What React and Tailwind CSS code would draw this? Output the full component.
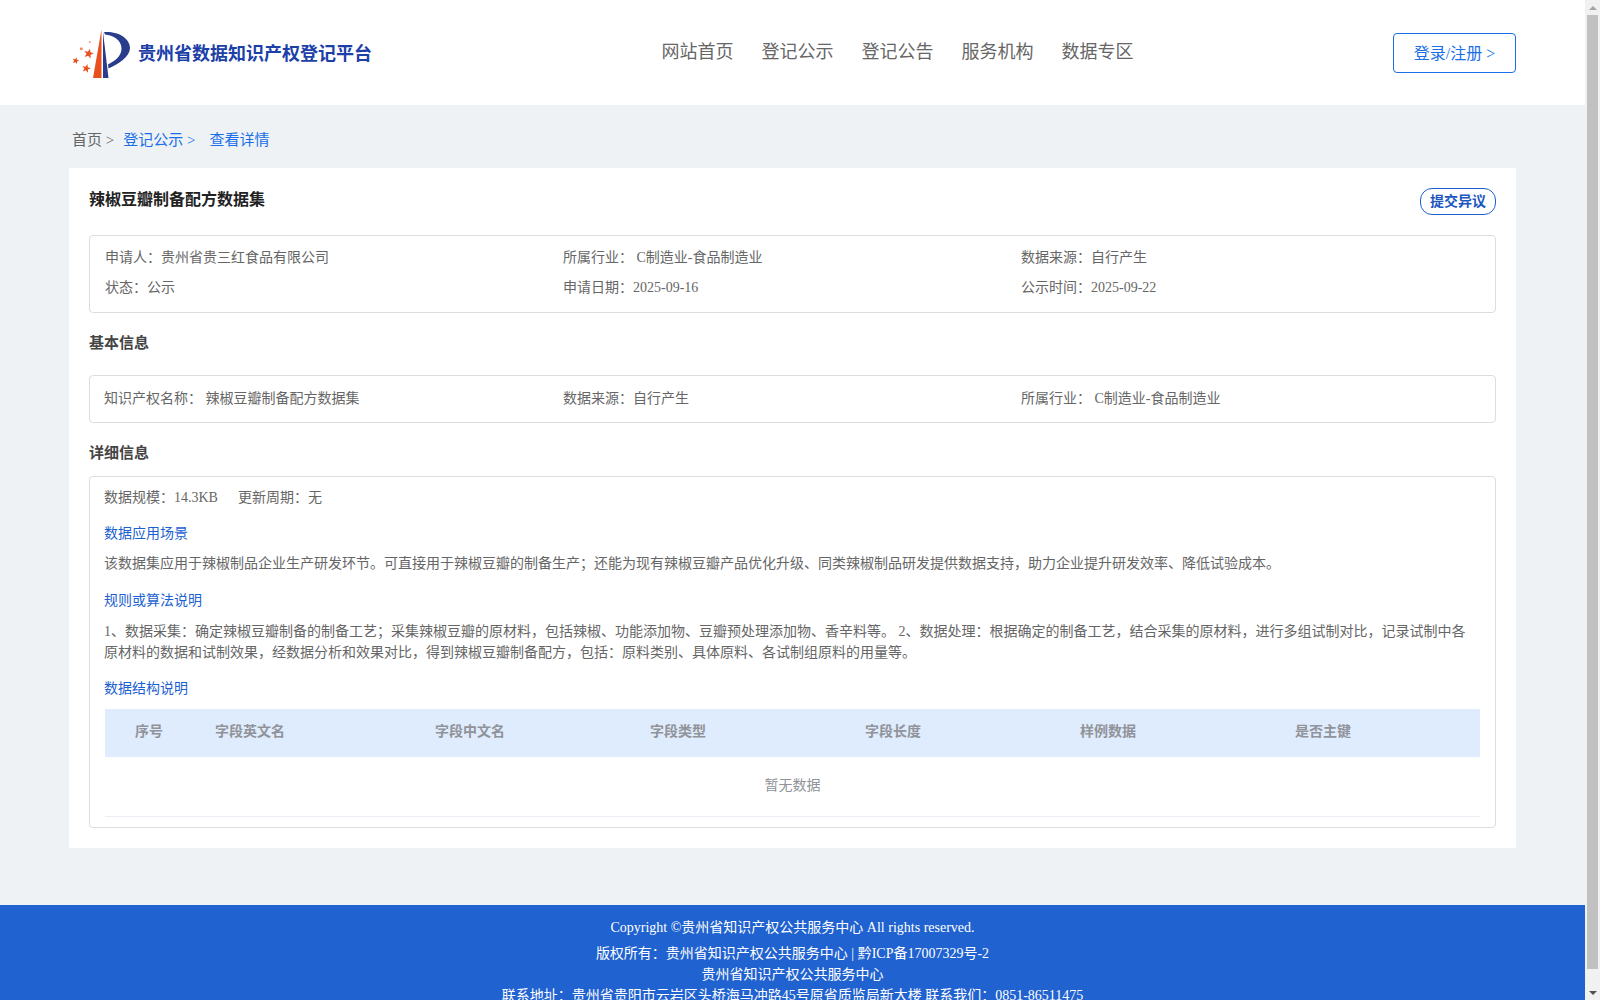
const serif = "font-['Liberation_Serif','Noto_Sans_CJK_SC',serif]";

function starPoints(cx, cy, r) {
  const pts = [];
  for (let i = 0; i < 10; i++) {
    const radius = i % 2 === 0 ? r : r * 0.42;
    const a = -Math.PI / 2 + (i * Math.PI) / 5 + 0.25;
    pts.push(`${(cx + radius * Math.cos(a)).toFixed(2)},${(cy + radius * Math.sin(a)).toFixed(2)}`);
  }
  return pts.join(" ");
}

function Logo() {
  return (
    <svg width="70" height="60" viewBox="0 0 70 60" className="-ml-[4px] shrink-0">
      <path d="M33.5 6.5 L25 55 L33.5 55 Z" fill="#e8501f" />
      <path d="M35 9 L35 55 L40.5 55 Z" fill="#2a3c8c" />
      <path d="M36 9 C50 8 62 15 62 25 C62 34 50 41 40.5 45.5 L40 41.5 C47 38 53.5 33 53.5 25.5 C53.5 17 45 12 37 11.5 Z" fill="#2a3c8c" />
      <polygon points={starPoints(20.7, 30.7, 5.2)} fill="#e8501f" />
      <polygon points={starPoints(18.3, 45.5, 4.6)} fill="#e8501f" />
      <polygon points={starPoints(7.7, 37.7, 3.6)} fill="#e8501f" />
      <circle cx="13.3" cy="25.7" r="1.5" fill="#ef8a5c" />
      <circle cx="21.7" cy="19" r="1.1" fill="#f0a080" />
    </svg>
  );
}

function Scrollbar() {
  return (
    <div className="flex h-screen w-[15px] shrink-0 flex-col bg-[#f1f1f1]">
      <div className="flex h-[15px] shrink-0 items-center justify-center">
        <div className="h-0 w-0 border-x-[4px] border-b-[4px] border-x-transparent border-b-[#a3a3a3]" />
      </div>
      <div className="mx-[2px] h-[954px] shrink-0 bg-[#c1c1c1]" />
      <div className="flex-1" />
      <div className="flex h-[15px] shrink-0 items-center justify-center">
        <div className="h-0 w-0 border-x-[4px] border-t-[4px] border-x-transparent border-t-[#505050]" />
      </div>
    </div>
  );
}

function Field({ label, value }) {
  return <div className="w-[458px] shrink-0">{label}{value}</div>;
}

const columns = ["序号", "字段英文名", "字段中文名", "字段类型", "字段长度", "样例数据", "是否主键"];

export default function App() {
  return (
    <div className={`flex h-screen overflow-hidden bg-[#eff2f5] ${serif}`}>
      <div className="min-w-0 flex-1 overflow-hidden">
        <header className="flex h-[105px] items-center justify-between bg-white pl-[72px] pr-[69px]">
          <div className="flex w-[330px] items-center">
            <Logo />
            <span className="mt-[4px] whitespace-nowrap text-[18px] font-bold text-[#1c3fa8]">贵州省数据知识产权登记平台</span>
          </div>
          <nav className="flex gap-[28px] text-[18px] text-[#666]">
            <span>网站首页</span>
            <span>登记公示</span>
            <span>登记公告</span>
            <span>服务机构</span>
            <span>数据专区</span>
          </nav>
          <button className="h-[40px] w-[123px] rounded-[4px] border border-[#1a6fe8] pt-[2px] text-[16px] text-[#1a6fe8]">登录/注册 &gt;</button>
        </header>

        <div className="flex h-[63px] items-center pl-[72px] pt-[8px] text-[15px] text-[#1a6fe8]">
          <span className="text-[#666]">首页 &gt;</span>
          <span className="ml-[9px]">登记公示 &gt;</span>
          <span className="ml-[14px]">查看详情</span>
        </div>

        <main className="ml-[69px] w-[1447px] bg-white px-[20px] pb-[20px] text-[14px] text-[#666]">
          <div className="flex h-[67px] items-center justify-between">
            <h1 className="-mt-[4px] text-[16px] font-bold text-[#222]">辣椒豆瓣制备配方数据集</h1>
            <button className="h-[27px] w-[76px] rounded-[12px] border border-[#1c5fd0] text-[14px] font-bold text-[#1c56c0]">提交异议</button>
          </div>

          <section className="rounded-[4px] border border-[#ddd] px-[15px] pb-[10px] pt-[11px] leading-[21px]">
            <div className="flex h-[30px] items-start">
              <Field label="申请人：" value="贵州省贵三红食品有限公司" />
              <Field label="所属行业：" value=" C制造业-食品制造业" />
              <Field label="数据来源：" value="自行产生" />
            </div>
            <div className="flex h-[25px] items-start">
              <Field label="状态：" value="公示" />
              <Field label="申请日期：" value="2025-09-16" />
              <Field label="公示时间：" value="2025-09-22" />
            </div>
          </section>

          <h2 className="flex h-[62px] items-center pb-[2px] text-[15px] font-bold text-[#444]">基本信息</h2>

          <section className="flex h-[48px] items-center rounded-[4px] border border-[#ddd] px-[14px] pb-[2px]">
            <div className="w-[459px] shrink-0">知识产权名称： 辣椒豆瓣制备配方数据集</div>
            <div className="w-[458px] shrink-0">数据来源：自行产生</div>
            <div className="w-[458px] shrink-0">所属行业： C制造业-食品制造业</div>
          </section>

          <h2 className="flex h-[53px] items-center pt-[8px] text-[15px] font-bold text-[#444]">详细信息</h2>

          <section className="rounded-[4px] border border-[#ddd] px-[14px] pb-[10px] pt-[10px] leading-[21px]">
            <div>
              <span>数据规模：14.3KB</span>
              <span className="ml-[20px]">更新周期：无</span>
            </div>
            <h3 className="mt-[15px] text-[#1c5fd0]">数据应用场景</h3>
            <p className="mt-[9px]">该数据集应用于辣椒制品企业生产研发环节。可直接用于辣椒豆瓣的制备生产；还能为现有辣椒豆瓣产品优化升级、同类辣椒制品研发提供数据支持，助力企业提升研发效率、降低试验成本。</p>
            <h3 className="mt-[16px] text-[#1c5fd0]">规则或算法说明</h3>
            <p className="mt-[10px] pr-[6px]">1、数据采集：确定辣椒豆瓣制备的制备工艺；采集辣椒豆瓣的原材料，包括辣椒、功能添加物、豆瓣预处理添加物、香辛料等。 2、数据处理：根据确定的制备工艺，结合采集的原材料，进行多组试制对比，记录试制中各原材料的数据和试制效果，经数据分析和效果对比，得到辣椒豆瓣制备配方，包括：原料类别、具体原料、各试制组原料的用量等。</p>
            <h3 className="mt-[15px] text-[#1c5fd0]">数据结构说明</h3>
            <div className="mx-px mt-[10px] grid h-[48px] grid-cols-[80px_220px_215px_215px_215px_215px_1fr] items-center bg-[#dfecfd] pb-[3px] font-bold text-[#909399]">
              {columns.map((c) => (
                <div key={c} className="pl-[30px]">{c}</div>
              ))}
            </div>
            <div className="mx-px flex h-[60px] items-center justify-center border-b border-[#ebeef5] pb-[2px] text-[#909399]">暂无数据</div>
          </section>
        </main>

        <footer className="mt-[57px] bg-[#2062d0] pb-[16px] pt-[12px] text-center text-[14px] leading-[21px] text-white">
          <div>Copyright ©贵州省知识产权公共服务中心 All rights reserved.</div>
          <div className="mt-[5px]">版权所有：贵州省知识产权公共服务中心 | 黔ICP备17007329号-2</div>
          <div>贵州省知识产权公共服务中心</div>
          <div>联系地址：贵州省贵阳市云岩区头桥海马冲路45号原省质监局新大楼 联系我们：0851-86511475</div>
        </footer>
      </div>
      <Scrollbar />
    </div>
  );
}
